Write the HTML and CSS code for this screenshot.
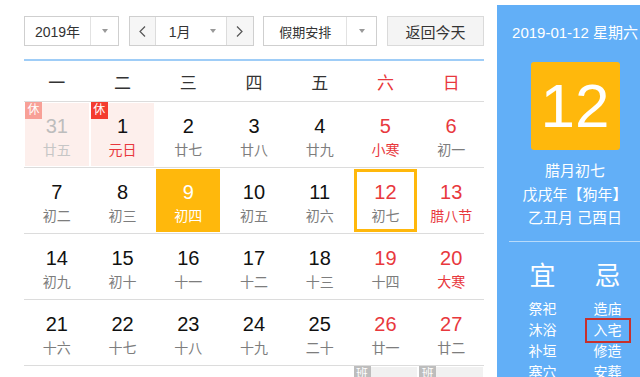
FILE: index.html
```html
<!DOCTYPE html>
<html lang="zh-CN">
<head>
<meta charset="utf-8">
<title>万年历</title>
<link rel="stylesheet" href="styles.css">
</head>
<body>
<div class="page">
  <div class="main">
    <div class="toolbar">
      <div class="sel year"><span class="sel-text">2019年</span><span class="sel-arrow"></span></div>
      <div class="sel month">
        <span class="nav"><svg width="7" height="11" viewBox="0 0 7 11"><polyline points="6,0.5 1,5.5 6,10.5" fill="none" stroke="#555" stroke-width="1.2"/></svg></span>
        <span class="month-part"><span class="sel-text">1月</span><span class="sel-arrow plain"></span></span>
        <span class="nav"><svg width="7" height="11" viewBox="0 0 7 11"><polyline points="1,0.5 6,5.5 1,10.5" fill="none" stroke="#555" stroke-width="1.2"/></svg></span>
      </div>
      <div class="sel holiday"><span class="sel-text">假期安排</span><span class="sel-arrow"></span></div>
      <div class="btn-today">返回今天</div>
    </div>
    <div class="blue-line"></div>
    <div class="weekhead">
      <span>一</span><span>二</span><span>三</span><span>四</span><span>五</span><span class="red">六</span><span class="red">日</span>
    </div>
    <div class="week">
      <div class="cell"><div class="in rest other"><span class="badge faded">休</span><div class="num">31</div><div class="lunar">廿五</div></div></div>
      <div class="cell"><div class="in rest"><span class="badge">休</span><div class="num">1</div><div class="lunar red">元日</div></div></div>
      <div class="cell"><div class="in"><div class="num">2</div><div class="lunar">廿七</div></div></div>
      <div class="cell"><div class="in"><div class="num">3</div><div class="lunar">廿八</div></div></div>
      <div class="cell"><div class="in"><div class="num">4</div><div class="lunar">廿九</div></div></div>
      <div class="cell"><div class="in"><div class="num red">5</div><div class="lunar red">小寒</div></div></div>
      <div class="cell"><div class="in"><div class="num red">6</div><div class="lunar">初一</div></div></div>
    </div>
    <div class="week">
      <div class="cell"><div class="in"><div class="num">7</div><div class="lunar">初二</div></div></div>
      <div class="cell"><div class="in"><div class="num">8</div><div class="lunar">初三</div></div></div>
      <div class="cell"><div class="in today"><div class="num">9</div><div class="lunar">初四</div></div></div>
      <div class="cell"><div class="in"><div class="num">10</div><div class="lunar">初五</div></div></div>
      <div class="cell"><div class="in"><div class="num">11</div><div class="lunar">初六</div></div></div>
      <div class="cell"><div class="in selected"><div class="num red">12</div><div class="lunar">初七</div></div></div>
      <div class="cell"><div class="in"><div class="num red">13</div><div class="lunar red">腊八节</div></div></div>
    </div>
    <div class="week">
      <div class="cell"><div class="in"><div class="num">14</div><div class="lunar">初九</div></div></div>
      <div class="cell"><div class="in"><div class="num">15</div><div class="lunar">初十</div></div></div>
      <div class="cell"><div class="in"><div class="num">16</div><div class="lunar">十一</div></div></div>
      <div class="cell"><div class="in"><div class="num">17</div><div class="lunar">十二</div></div></div>
      <div class="cell"><div class="in"><div class="num">18</div><div class="lunar">十三</div></div></div>
      <div class="cell"><div class="in"><div class="num red">19</div><div class="lunar">十四</div></div></div>
      <div class="cell"><div class="in"><div class="num red">20</div><div class="lunar red">大寒</div></div></div>
    </div>
    <div class="week">
      <div class="cell"><div class="in"><div class="num">21</div><div class="lunar">十六</div></div></div>
      <div class="cell"><div class="in"><div class="num">22</div><div class="lunar">十七</div></div></div>
      <div class="cell"><div class="in"><div class="num">23</div><div class="lunar">十八</div></div></div>
      <div class="cell"><div class="in"><div class="num">24</div><div class="lunar">十九</div></div></div>
      <div class="cell"><div class="in"><div class="num">25</div><div class="lunar">二十</div></div></div>
      <div class="cell"><div class="in"><div class="num red">26</div><div class="lunar">廿一</div></div></div>
      <div class="cell"><div class="in"><div class="num red">27</div><div class="lunar">廿二</div></div></div>
    </div>
    <div class="week last">
      <div class="cell"><div class="in"></div></div>
      <div class="cell"><div class="in"></div></div>
      <div class="cell"><div class="in"></div></div>
      <div class="cell"><div class="in"></div></div>
      <div class="cell"><div class="in other"></div></div>
      <div class="cell"><div class="in work other"><span class="badge gray">班</span></div></div>
      <div class="cell"><div class="in work other"><span class="badge gray">班</span></div></div>
    </div>
  </div>
  <div class="panel">
    <div class="p-date">2019-01-12 星期六</div>
    <div class="p-day">12</div>
    <div class="p-lunar">
      <div>腊月初七</div>
      <div>戊戌年【狗年】</div>
      <div>乙丑月 己酉日</div>
    </div>
    <div class="p-line"></div>
    <div class="yiji">
      <div class="col">
        <div class="col-title">宜</div>
        <div class="items">
          <div>祭祀</div>
          <div>沐浴</div>
          <div>补垣</div>
          <div>塞穴</div>
        </div>
      </div>
      <div class="col">
        <div class="col-title">忌</div>
        <div class="items">
          <div>造庙</div>
          <div><span class="boxed">入宅</span></div>
          <div>修造</div>
          <div>安葬</div>
        </div>
      </div>
    </div>
  </div>
</div>
</body>
</html>
```
FILE: styles.css
```css
html, body {
  margin: 0;
  padding: 0;
  width: 640px;
  height: 377px;
  overflow: hidden;
  background: #fff;
}
body {
  font-family: "Liberation Sans", "Noto Sans CJK SC", sans-serif;
  color: #333;
}
.page {
  display: flex;
  width: 640px;
  height: 377px;
  overflow: hidden;
}
.main {
  width: 460px;
  flex-shrink: 0;
  padding: 0 13px 0 24px;
  height: 377px;
  overflow: hidden;
}
.toolbar {
  margin-top: 16px;
  height: 30px;
  display: flex;
  justify-content: space-between;
}
.sel {
  display: flex;
  height: 30px;
  box-sizing: border-box;
  border: 1px solid #cfcfcf;
  background: #fff;
}
.sel-text {
  flex: 1;
  display: flex;
  align-items: center;
  justify-content: center;
  font-size: 14px;
  color: #333;
}
.sel-arrow {
  width: 27px;
  border-left: 1px solid #e2e2e2;
  display: flex;
  align-items: center;
  justify-content: center;
}
.sel-arrow::after {
  content: "";
  border-left: 3.5px solid transparent;
  border-right: 3.5px solid transparent;
  border-top: 4px solid #999;
}
.sel-arrow.plain {
  border-left: none;
}
.year {
  width: 95px;
}
.month {
  width: 125px;
}
.nav {
  width: 26px;
  display: flex;
  align-items: center;
  justify-content: center;
  background: #f6f6f6;
}
.month-part {
  display: flex;
  width: 71px;
  border-left: 1px solid #dcdcdc;
  border-right: 1px solid #dcdcdc;
}
.month-part .sel-text {
  padding-left: 4px;
}
.holiday {
  width: 114px;
}
.holiday .sel-text {
  font-size: 13px;
}
.holiday .sel-arrow {
  width: 29px;
}
.btn-today {
  width: 97px;
  height: 30px;
  box-sizing: border-box;
  border: 1px solid #dadada;
  background: #f4f4f4;
  display: flex;
  align-items: center;
  justify-content: center;
  font-size: 15px;
  color: #333;
}
.blue-line {
  margin-top: 13px;
  height: 2px;
  background: #9fcdf7;
}
.weekhead {
  display: grid;
  grid-template-columns: repeat(7, 1fr);
  height: 40px;
  border-bottom: 1px solid #dcdcdc;
  align-items: center;
  text-align: center;
  font-size: 17px;
  color: #333;
}
.red {
  color: #e8383d;
}
.week {
  display: grid;
  grid-template-columns: repeat(7, 1fr);
  height: 66px;
  box-sizing: border-box;
  border-bottom: 1px solid #dcdcdc;
}
.week.last {
  height: 12px;
  border-bottom: none;
}
.cell {
  padding: 1px;
  min-width: 0;
}
.in {
  position: relative;
  height: 63px;
  box-sizing: border-box;
  padding-top: 11px;
  text-align: center;
}
.num {
  font-size: 20px;
  line-height: 24px;
  color: #111;
}
.num.red {
  color: #e8383d;
}
.lunar {
  margin-top: 3px;
  font-size: 14px;
  line-height: 18px;
  color: #7d7d7d;
}
.lunar.red {
  color: #e8383d;
}
.rest {
  background: #fdefec;
}
.work {
  background: #f1f1f1;
}
.other .num {
  color: #bdbdbd;
}
.other .lunar {
  color: #c6c6c6;
}
.today {
  background: #ffb80c;
}
.today .num,
.today .lunar {
  color: #fff;
}
.selected {
  border: 3px solid #ffb80c;
  padding-top: 8px;
}
.badge {
  position: absolute;
  top: -1px;
  left: 0;
  width: 17px;
  height: 17px;
  line-height: 17px;
  font-size: 12px;
  text-align: center;
  color: #fff;
  background: #f43c2f;
}
.badge.faded {
  background: #f8a097;
}
.badge.gray {
  background: #bdbdbd;
}
.panel {
  width: 156px;
  flex-shrink: 0;
  margin-top: 5px;
  height: 372px;
  background: #62aff7;
  color: #fff;
  text-align: center;
}
.p-date {
  margin-top: 18px;
  font-size: 15px;
  line-height: 20px;
  white-space: nowrap;
}
.p-day {
  width: 89px;
  height: 88px;
  margin: 19px auto 0;
  border-radius: 3px;
  background: #ffb80c;
  font-size: 62px;
  line-height: 88px;
  color: #fff;
}
.p-lunar {
  margin-top: 9px;
  font-size: 15px;
  line-height: 23.5px;
}
.p-line {
  margin: 11px 12px 0;
  height: 1px;
  background: rgba(255, 255, 255, 0.55);
}
.yiji {
  display: flex;
  padding: 0 13px;
  margin-top: 19px;
}
.col {
  width: 65px;
}
.col-title {
  font-size: 26px;
  line-height: 30px;
}
.items {
  margin-top: 8px;
  font-size: 14px;
  line-height: 21px;
}
.boxed {
  display: inline-block;
  padding: 0 7px;
  line-height: 21px;
  outline: 2px solid #c7302c;
}
```
